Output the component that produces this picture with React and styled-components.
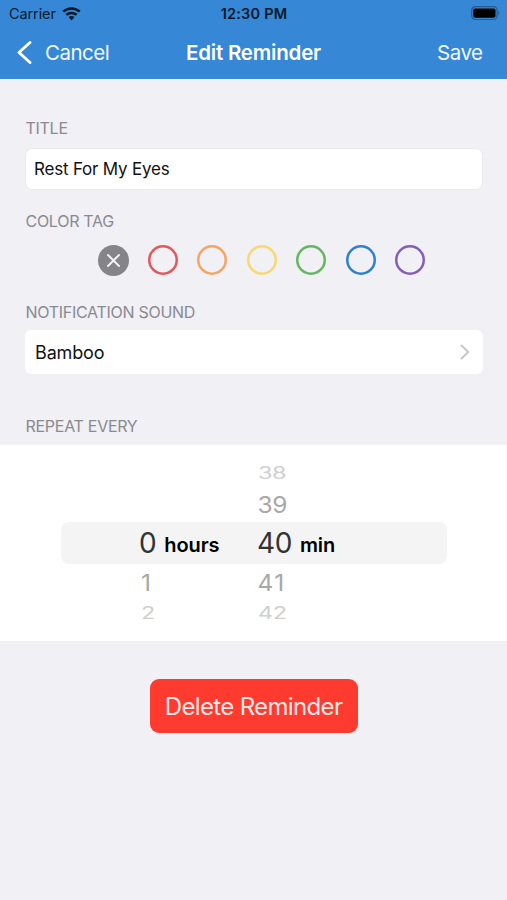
import { useState } from "react";
import styled, { createGlobalStyle } from "styled-components";

const tagColors = [
  "#e2575a",
  "#f4a566",
  "#f6d973",
  "#64b75e",
  "#2f80cf",
  "#8360b5",
];

const wheelRows = [
  { hours: "", minutes: "38", size: "far" },
  { hours: "", minutes: "39", size: "near" },
  { hours: "0", minutes: "40", size: "selected" },
  { hours: "1", minutes: "41", size: "near", spacing: 1.4, drop: 1, indent: 2 },
  { hours: "2", minutes: "42", size: "far", indent: 2 },
];

const wheelSizes = {
  far: { height: 28, font: 23.5, squash: 0.72, color: "#cfcfcf", inset: 1 },
  near: { height: 35, font: 24.5, squash: 0.95, color: "#a8a8a8", inset: 0.5 },
  selected: { height: 42, font: 28, squash: 1, color: "#333", inset: 0 },
};

const WifiIcon = () => (
  <svg width="19" height="14" viewBox="0 0 19 14" fill="#06192b">
    <path d="M9.5 0.3c3.5 0 6.7 1.3 9.1 3.5l-1.7 1.8a10.9 10.9 0 0 0-14.8 0L0.4 3.8A13.4 13.4 0 0 1 9.5 0.3Z" />
    <path d="M9.5 4.7c2.3 0 4.4 0.9 6 2.3l-1.7 1.8a6.4 6.4 0 0 0-8.6 0L3.5 7a8.9 8.9 0 0 1 6-2.3Z" />
    <path d="M9.5 9c1.1 0 2.1 0.4 2.9 1.1L9.5 13.4l-2.9-3.3A4.4 4.4 0 0 1 9.5 9Z" />
  </svg>
);

const BatteryIcon = () => (
  <svg width="30" height="15" viewBox="0 0 30 15">
    <rect
      x="0.7"
      y="0.7"
      width="25.4"
      height="12.8"
      rx="3.6"
      fill="none"
      stroke="#245b90"
      strokeWidth="1.2"
    />
    <rect x="2.3" y="2.5" width="22.2" height="9.2" rx="1.8" fill="#000" />
    <path d="M27.3 5.1c1.6 0.6 1.6 3.4 0 4Z" fill="#245b90" />
  </svg>
);

const BackIcon = () => (
  <svg width="16" height="25" viewBox="0 0 16 25" fill="none">
    <path
      d="M14 2.5 3 12.5 14 22.5"
      stroke="#fff"
      strokeWidth="2.9"
      strokeLinecap="round"
      strokeLinejoin="round"
    />
  </svg>
);

const CrossIcon = () => (
  <svg width="13" height="13" viewBox="0 0 13 13" fill="none">
    <path
      d="M1 1l11 11M12 1 1 12"
      stroke="#f4f4f6"
      strokeWidth="1.9"
      strokeLinecap="round"
    />
  </svg>
);

const ChevronIcon = () => (
  <svg width="10" height="16" viewBox="0 0 10 16" fill="none">
    <path
      d="M1.5 1.5 8.2 8l-6.7 6.5"
      stroke="#c5c5c7"
      strokeWidth="1.8"
      strokeLinecap="round"
      strokeLinejoin="round"
    />
  </svg>
);

const App = () => {
  const [title, setTitle] = useState("Rest For My Eyes");

  return (
    <Screen>
      <GlobalStyle />
      <Header>
        <StatusBar>
          <Carrier>
            Carrier
            <WifiIcon />
          </Carrier>
          <Clock>12:30 PM</Clock>
          <BatteryIcon />
        </StatusBar>
        <NavBar>
          <NavButton>
            <BackIcon />
            Cancel
          </NavButton>
          <NavTitle>Edit Reminder</NavTitle>
          <NavButton $end>Save</NavButton>
        </NavBar>
      </Header>

      {/* reminder form */}
      <Form>
        <Label>TITLE</Label>
        <TitleInput value={title} onChange={(e) => setTitle(e.target.value)} />
        <Label $top={21}>COLOR TAG</Label>
        <Tags>
          <NoTag>
            <CrossIcon />
          </NoTag>
          {tagColors.map((color) => (
            <Tag key={color} $color={color} />
          ))}
        </Tags>
        <Label $top={26}>NOTIFICATION SOUND</Label>
        <SoundRow>
          Bamboo
          <ChevronIcon />
        </SoundRow>
        <Label $top={42}>REPEAT EVERY</Label>
      </Form>

      {/* time wheel */}
      <Picker>
        {wheelRows.map(({ hours, minutes, size, spacing, drop, indent }) => (
          <WheelRow key={minutes} $size={size}>
            <Cell>
              <Digits $size={size} $drop={drop} $inset={indent}>
                {hours}
              </Digits>
              {size === "selected" && <Unit>hours</Unit>}
            </Cell>
            <Cell>
              <Digits $size={size} $drop={drop} $spacing={spacing}>
                {minutes}
              </Digits>
              {size === "selected" && <Unit>min</Unit>}
            </Cell>
          </WheelRow>
        ))}
      </Picker>

      <DeleteButton>Delete Reminder</DeleteButton>
    </Screen>
  );
};

const GlobalStyle = createGlobalStyle`
  * {
    box-sizing: border-box;
  }

  body {
    margin: 0;
    background: #f0f0f5;
    font-family: Inter, "Liberation Sans", sans-serif;
  }

  button {
    border: none;
    font-family: inherit;
  }

  svg {
    display: block;
    flex-shrink: 0;
  }
`;

const Screen = styled.div`
  display: flex;
  flex-direction: column;
  min-height: 900px;
  background: #f0f0f5;
`;

const Header = styled.header`
  height: 79px;
  background: #3687d6;
`;

const StatusBar = styled.div`
  display: grid;
  grid-template-columns: 1fr auto 1fr;
  align-items: center;
  height: 27px;
  padding: 0 6px 0 9px;
  color: #06192b;

  > svg {
    justify-self: end;
  }
`;

const Carrier = styled.div`
  display: flex;
  align-items: center;
  gap: 6px;
  font-size: 14.5px;
  letter-spacing: -0.1px;
`;

const Clock = styled.div`
  margin-right: 2px;
  font-size: 14.5px;
  font-weight: 600;
  letter-spacing: 0.2px;
`;

const NavBar = styled.nav`
  display: grid;
  grid-template-columns: 1fr auto 1fr;
  align-items: center;
  height: 50px;
  padding: 0 16px;
`;

const NavButton = styled.button`
  display: flex;
  align-items: center;
  gap: 13px;
  justify-self: ${({ $end }) => ($end ? "end" : "start")};
  margin-right: ${({ $end }) => ($end ? 8.5 : 0)}px;
  padding: 0;
  background: none;
  color: #f1f7fd;
  font-size: 20.5px;
  letter-spacing: -0.5px;
`;

const NavTitle = styled.h1`
  margin: 0;
  color: #fff;
  font-size: 20.5px;
  font-weight: 600;
  letter-spacing: -0.2px;
`;

const Form = styled.div`
  display: flex;
  flex-direction: column;
  height: 366px;
  padding: 39px 24px 0 25px;
`;

const Label = styled.div`
  margin-top: ${({ $top = 0 }) => $top}px;
  padding-left: 0.5px;
  color: #8a8a8f;
  font-size: 16px;
  line-height: 20px;
  letter-spacing: -0.28px;
`;

const TitleInput = styled.input`
  height: 42px;
  margin: 10px 0 0;
  padding: 0 8px;
  border: 1px solid #e9e9ee;
  border-radius: 7px;
  outline: none;
  background: #fff;
  color: #111;
  font-family: inherit;
  font-size: 17px;
  letter-spacing: -0.2px;
`;

const Tags = styled.div`
  display: flex;
  align-items: flex-start;
  gap: 19.5px;
  height: 31px;
  margin-top: 14px;
  padding-left: 73px;
`;

const NoTag = styled.div`
  display: flex;
  justify-content: center;
  align-items: center;
  width: 31px;
  height: 31px;
  margin-right: -1px;
  border-radius: 50%;
  background: #858589;
`;

const Tag = styled.div`
  width: 30px;
  height: 30px;
  border-radius: 50%;
  box-shadow: inset 0 0 0 2.5px ${({ $color }) => $color};
`;

const SoundRow = styled.div`
  display: flex;
  justify-content: space-between;
  align-items: center;
  height: 44px;
  margin: 8px 0 0;
  padding: 0 13px 0 10px;
  border-radius: 6px;
  background: #fff;
  color: #111;
  font-size: 18px;
  letter-spacing: -0.15px;
`;

const Picker = styled.div`
  height: 196px;
  padding: 14px 60px 0 61px;
  background: #fff;
`;

const WheelRow = styled.div`
  display: grid;
  grid-template-columns: 118px 1fr;
  height: ${({ $size }) => wheelSizes[$size].height}px;
  padding-left: 78px;
  border-radius: 8px;
  background: ${({ $size }) => ($size === "selected" ? "#f4f4f4" : "none")};
`;

const Cell = styled.div`
  display: flex;
  align-items: center;
  gap: 8px;
`;

const Digits = styled.span`
  padding-top: ${({ $drop = 0 }) => $drop}px;
  padding-left: ${({ $size, $inset }) => $inset ?? wheelSizes[$size].inset}px;
  color: ${({ $size }) => wheelSizes[$size].color};
  font-size: ${({ $size }) => wheelSizes[$size].font}px;
  line-height: 1;
  letter-spacing: ${({ $spacing = -0.4 }) => $spacing}px;
  transform: scaleY(${({ $size }) => wheelSizes[$size].squash});
`;

const Unit = styled.span`
  padding-top: 4px;
  color: #000;
  font-size: 20px;
  font-weight: 600;
  line-height: 1;
  letter-spacing: -0.1px;
`;

const DeleteButton = styled.button`
  align-self: center;
  width: 208px;
  height: 54px;
  margin-top: 38px;
  padding: 0;
  border-radius: 9px;
  background: #ff3b30;
  color: #ffe9e7;
  font-size: 24px;
  letter-spacing: -0.65px;
`;

export default App;
